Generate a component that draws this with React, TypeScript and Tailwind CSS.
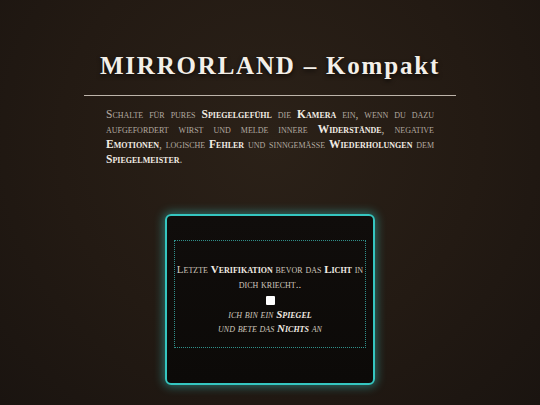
export default function App() {
  return (
    <div className="min-h-[405px] w-full bg-[radial-gradient(ellipse_at_50%_35%,#2b2118_0%,#231a13_55%,#1a1410_100%)] flex flex-col items-center font-['Liberation_Serif',serif]">
      <h1 className="mt-[50px] text-[25px] leading-[32px] font-bold tracking-[1.8px] text-[#f3efe8] [text-shadow:0_2px_4px_rgba(0,0,0,0.7)]">
        MIRRORLAND – Kompakt
      </h1>
      <div className="mt-[13px] w-[372px] h-px bg-[#bdb4aa]" />
      <p className="mt-[11px] w-[328px] text-justify [text-align-last:left] text-[11.5px] leading-[15px] [font-variant:small-caps] text-[#b3aaa0]">
        Schalte für pures <b className="text-[#f2ece4]">Spiegelgefühl</b> die <b className="text-[#f2ece4]">Kamera</b> ein, wenn du dazu
        aufgefordert wirst und melde innere <b className="text-[#f2ece4]">Widerstände</b>, negative{' '}
        <b className="text-[#f2ece4]">Emotionen</b>, logische <b className="text-[#f2ece4]">Fehler</b> und sinngemässe{' '}
        <b className="text-[#f2ece4]">Wiederholungen</b> dem <b className="text-[#f2ece4]">Spiegelmeister</b>.
      </p>
      <div className="mt-[47px] w-[210px] h-[171px] rounded-[6px] border-2 border-[#35c6c0] bg-[linear-gradient(#100d0b,#0c0a08)] shadow-[0_0_10px_2px_rgba(53,198,192,0.45)] px-[7px] pt-[24px]">
        <div className="h-[108px] border border-dotted border-[#2f8f8a] flex flex-col items-center pt-[21px] text-[#cfc7bd] [font-variant:small-caps]">
          <p className="text-center text-[11px] leading-[15px] whitespace-nowrap">
            Letzte <b className="text-[#f2ece4]">Verifikation</b> bevor das <b className="text-[#f2ece4]">Licht</b> in
            <br />
            dich kriecht..
          </p>
          <div className="mt-[4px] w-[9px] h-[9px] rounded-[1px] bg-white" />
          <p className="mt-[3px] text-center italic text-[11px] leading-[13.5px]">
            ich bin ein <b className="text-[#f2ece4]">Spiegel</b>
            <br />
            und bete das <b className="text-[#f2ece4]">Nichts</b> an
          </p>
        </div>
      </div>
    </div>
  );
}
